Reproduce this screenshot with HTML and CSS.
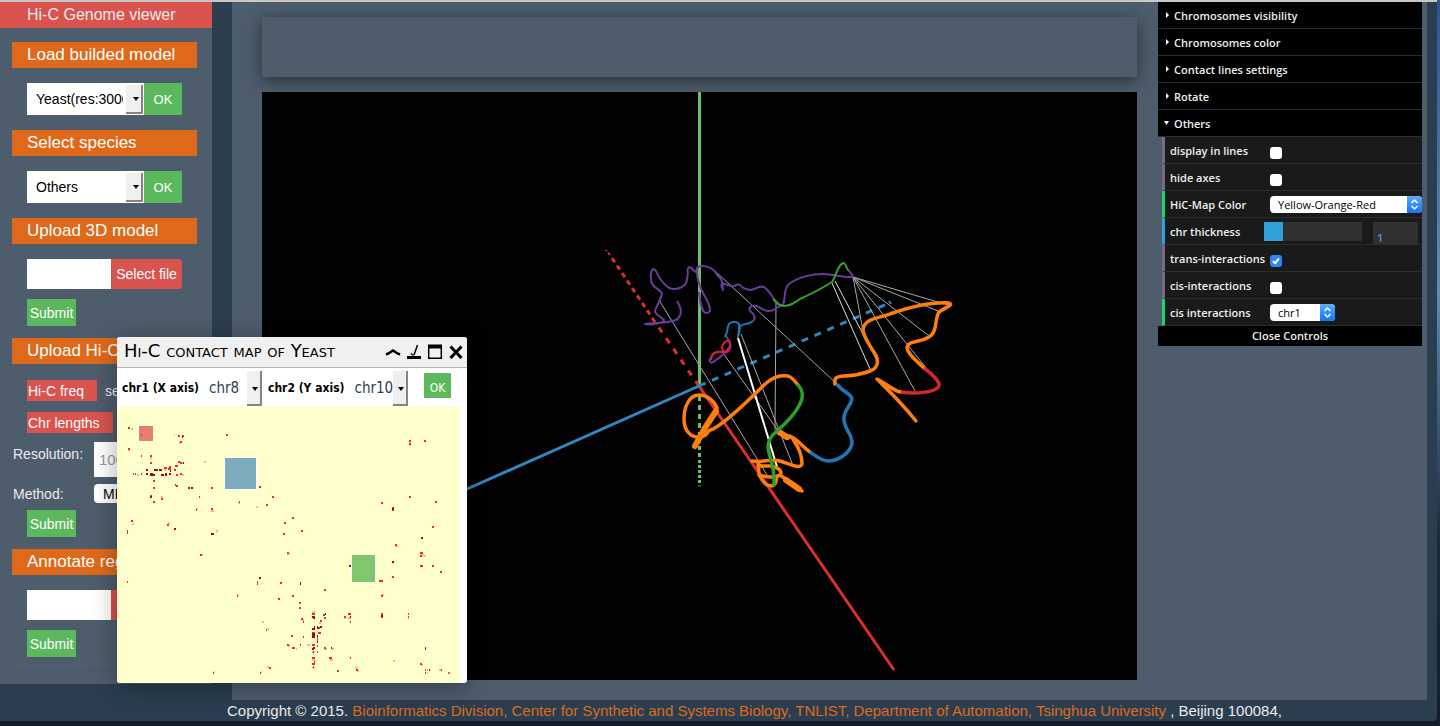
FILE: index.html
```html
<!DOCTYPE html>
<html lang="en">
<head>
<meta charset="utf-8">
<title>Hi-C Genome viewer</title>
<link rel="stylesheet" href="styles.css">
</head>
<body>
<div class="window">
  <div class="columns">
    <aside class="sidebar">
      <h1 class="brand">Hi-C Genome viewer</h1>
      <div class="sections">
        <h2 class="heading">Load builded model</h2>
        <div class="pick-row">
          <span class="pick"><select aria-label="Builded model"><option>Yeast(res:3000)</option></select></span>
          <button class="ok">OK</button>
        </div>
        <h2 class="heading">Select species</h2>
        <div class="pick-row">
          <span class="pick"><select aria-label="Species"><option>Others</option></select></span>
          <button class="ok">OK</button>
        </div>
        <h2 class="heading">Upload 3D model</h2>
        <div class="file-row">
          <input class="file-name" type="text" aria-label="3D model file">
          <button class="file-button">Select file</button>
        </div>
        <button class="submit">Submit</button>
        <h2 class="heading heading-close">Upload Hi-C data</h2>
        <div class="tag-row"><button class="tag tag-freq">Hi-C freq</button><span>select file</span></div>
        <div class="tag-row"><button class="tag tag-chr">Chr lengths</button></div>
        <div class="field-row">
          <label for="resolution">Resolution:</label>
          <input id="resolution" class="resolution" type="text" placeholder="10000">
        </div>
        <div class="field-row">
          <label for="method">Method:</label>
          <select id="method" class="method"><option>MDS</option></select>
        </div>
        <button class="submit submit-near">Submit</button>
        <h2 class="heading heading-close">Annotate regions</h2>
        <div class="file-row">
          <input class="file-name" type="text" aria-label="Annotation file">
          <button class="file-button">Select file</button>
        </div>
        <button class="submit">Submit</button>
        <hr class="rule">
      </div>
    </aside>

    <main class="main">
      <div class="stage">
        <div class="banner"></div>
        <svg class="scene" viewBox="262 92 875 588" role="img" aria-label="3D genome model">
          <g class="axis">
            <path class="ax-green" stroke-width="3" d="M699.5 92V386"/>
            <path class="ax-green" stroke-width="3" stroke-dasharray="5 4" d="M699.5 396V430"/>
            <path class="ax-green" stroke-width="3" stroke-dasharray="4 3" d="M699.5 432V460"/>
            <path class="ax-green" stroke-width="3" stroke-dasharray="3 2" d="M699.5 460V483"/>
            <path class="ax-green" stroke-width="3" opacity=".4" d="M699.5 485v2"/>
            <path class="ax-red" stroke-width="3" d="M699 386 894 670"/>
            <path class="ax-red" stroke-width="3" stroke-dasharray="6 7" d="M699 386 655 322"/>
            <path class="ax-red" stroke-width="3" stroke-dasharray="5 4" d="M655 322 612 258"/>
            <path class="ax-red" stroke-width="2" stroke-dasharray="3 2" d="M610 255 606 250"/>
            <path class="ax-blue" stroke-width="3" d="M699 386 440 501"/>
            <path class="ax-blue" stroke-width="3" stroke-dasharray="7 7" d="M699 386 887 304"/>
            <path class="ax-blue" stroke-width="2" d="M889 301l2 3"/>
          </g>
          <g class="contacts">
            <path d="M715 271 837 384M659 300 767 475M723 353 779 432M741 334 792 463M776 303 775 430"/>
            <path d="M853 277 863 331M853 277 915 391M853 277 927 369M853 277 929 336M853 277 938 311M853 277 948 305"/>
            <path class="strong" d="M832 283 870 369M835 281 863 334"/>
            <path class="strongest" d="M738 338 777 467"/>
          </g>
          <g class="purple">
            <path d="M677 301C682 309 682 316 676 320C668 323 655 323 645 324C651 325 663 324 664 320C662 317 657 316 655 312C655 308 661 300 662 293C658 288 651 287 651 279C650 270 653 267 656 271C659 279 665 285 669 288C678 291 687 286 687 279C689 271 686 269 689 267C693 268 694 273 697 272C696 269 697 266 702 266C710 266 715 270 718 276C722 278 723 283 723 290C721 286 720 283 725 284C728 286 729 285 733 286C737 286 737 283 740 285C743 289 746 289 750 290C756 290 758 285 764 287C769 290 772 297 775 300C778 304 779 305 783 305C786 298 783 289 789 284C798 277 812 274 823 274C834 274 842 278 853 277C853 274 851 273 849 271"/>
            <path d="M698 267C695 275 700 288 704 295C711 307 712 313 706 313C701 312 700 300 699 292"/>
            <path d="M783 305C778 306 773 312 768 311C764 311 760 307 756 306C752 305 748 307 750 311C753 313 757 318 753 321"/>
            <path d="M725 335C727 338 731 341 730 346C727 351 722 356 716 360C709 366 709 360 711 357C713 352 719 351 723 352"/>
          </g>
          <path class="blue-thin" d="M753 321C749 325 744 323 740 326C740 331 739 333 738 337C739 328 741 322 735 322C727 321 728 328 727 332L725 337"/>
          <path class="red-thin" d="M711 360C712 352 717 351 723 352C732 353 731 344 729 341C725 340 722 345 722 348C723 351 725 353 727 352"/>
          <path class="green-thin" d="M773 299C777 303 779 306 784 306C790 306 794 303 800 299C813 293 821 289 832 282C836 277 838 263 844 263C847 265 846 269 849 271"/>
          <g class="orange">
            <path d="M835 384C834 376 838 377 843 376C855 376 862 374 870 371C880 367 878 359 875 354C868 342 864 338 863 330C864 318 880 318 890 314C913 306 933 302 949 303C954 305 946 307 939 312C934 320 938 332 929 337C919 343 908 340 907 348C908 355 919 363 924 368"/>
            <path d="M901 392C893 391 886 383 877 379C886 388 901 402 916 421"/>
            <path d="M717 408C715 402 708 395 699 395C689 395 684 407 684 419C684 431 691 438 700 437C710 436 705 430 713 429C726 422 747 402 764 385C773 377 779 375 788 376C793 378 795 381 798 385"/>
            <path d="M778 430C781 433 784 439 788 438C789 434 793 437 794 441C799 448 802 456 802 464C801 470 787 463 780 461C770 458 762 463 752 461"/>
            <path d="M791 437C797 439 803 447 810 452"/>
            <path d="M757 461C760 464 757 469 760 476C763 483 767 486 772 486C776 485 776 481 777 476"/>
            <path d="M758 466H771C777 467 781 470 781 473C780 478 768 478 759 475"/>
            <path class="thick" d="M716 411C709 421 701 434 695 446"/>
            <path class="thick" d="M779 432 787 437M786 480 799 489"/>
            <path d="M780 475 802 491"/>
          </g>
          <path class="red-thick" d="M924 368C930 373 940 380 939 386C936 393 914 394 901 392"/>
          <path class="blue-thick" d="M837 384C842 392 851 393 852 399C850 408 843 410 844 420C845 431 853 434 852 444C849 454 838 461 828 461C820 460 816 456 810 452"/>
          <path class="green-thick" d="M798 385C802 389 804 396 800 404C794 416 784 425 777 431C772 435 768 440 768 447C769 459 775 464 774 485"/>
        </svg>
      </div>

      <section class="controls" aria-label="Controls">
        <button class="folder">Chromosomes visibility</button>
        <button class="folder">Chromosomes color</button>
        <button class="folder">Contact lines settings</button>
        <button class="folder">Rotate</button>
        <button class="folder open">Others</button>
        <div class="options">
          <div class="option"><label for="lines">display in lines</label><input id="lines" type="checkbox"></div>
          <div class="option"><label for="axes">hide axes</label><input id="axes" type="checkbox"></div>
          <div class="option choice"><label for="mapcolor">HiC-Map Color</label>
            <span class="mac wide"><select id="mapcolor"><option>Yellow-Orange-Red</option></select><svg viewBox="0 0 14 17"><path d="M4 7 7 4l3 3M4 10l3 3 3-3"/></svg></span></div>
          <div class="option number"><label for="thickness">chr thickness</label>
            <input id="thickness" class="slider" type="range" min="0" max="5" value="1"><input class="amount" type="text" value="1" aria-label="chr thickness value"></div>
          <div class="option"><label for="trans">trans-interactions</label><input id="trans" type="checkbox" checked></div>
          <div class="option"><label for="cis">cis-interactions</label><input id="cis" type="checkbox"></div>
          <div class="option choice"><label for="cischr">cis interactions</label>
            <span class="mac"><select id="cischr"><option>chr1</option></select><svg viewBox="0 0 14 17"><path d="M4 7 7 4l3 3M4 10l3 3 3-3"/></svg></span></div>
        </div>
        <button class="close-controls">Close Controls</button>
      </section>
    </main>
  </div>

  <footer class="footer">Copyright © 2015. <a href="#">Bioinformatics Division, Center for Synthetic and Systems Biology, TNLIST, Department of Automation, Tsinghua University</a> , Beijing 100084,</footer>

  <section class="dialog" aria-label="Hi-C contact map of Yeast">
    <header class="dialog-bar">
      <h2 class="dialog-title">Hi-C contact map of Yeast</h2>
      <button class="tool" aria-label="Collapse"><svg viewBox="0 0 16 16"><path d="M1 10.500C4 9.500 6 8 8 6.500C10 8 12 9.500 15 10.500" stroke-width="2.500"/></svg></button>
      <button class="tool" aria-label="Minimize"><svg viewBox="0 0 16 16"><path d="M1 13.500H15" stroke-width="3"/><path d="M11.500 1 8 11" stroke-width="1.500"/><path d="M5 9.500 7.500 11.500" stroke-width="1.500"/></svg></button>
      <button class="tool" aria-label="Maximize"><svg viewBox="0 0 16 16"><path d="M1.700 2V14.300H14.300V2" stroke-width="1.500"/><path d="M1 2.500H15" stroke-width="4"/></svg></button>
      <button class="tool" aria-label="Close"><svg viewBox="0 0 16 16"><path d="M2.500 2.500 13.500 14M13.500 2.500 2.500 14" stroke-width="3"/></svg></button>
    </header>
    <div class="dialog-form">
      <label for="xchr">chr1 (X axis)</label>
      <span class="pick axis-pick"><select id="xchr"><option>chr8</option></select></span>
      <label for="ychr">chr2 (Y axis)</label>
      <span class="pick axis-pick"><select id="ychr"><option>chr10</option></select></span>
      <button class="ok-small">OK</button>
    </div>
    <svg class="heatmap" viewBox="117 407 343 276" role="img" aria-label="Contact map">
      <path class="low" d="M131 429h2M174 435h1M179 443h2M182 463h2M204 462h2M409 442h2M409 445h2M128 450h2M150 458h2M164 470h2M137 475h2M182 475h2M161 497h2M238 503h2M256 507h2M196 509h2M211 511h3M132 524h2M168 523h2M216 531h2M217 532h1M200 555h3M287 554h3M421 555h3M424 556h2M395 546h3M393 563h1M381 595h3M237 595h2M312 612h3M344 618h2M348 618h3M408 618h1M302 620h2M319 623h2M262 622h2M267 629h2M288 646h2M307 645h3M324 649h3M332 649h2M312 652h3M312 660h3M330 660h3M315 661h1M312 668h3M393 661h2M421 665h2M267 667h2M355 668h3M357 671h2M296 649h1M214 672h1M261 672h1M427 670h1M439 670h2M449 673h2M427 673h1"/>
      <path class="mid" d="M128 428h2M178 436h2M182 436h2M180 442h2M226 435h2M409 441h2M409 444h2M424 441h2M128 449h2M141 456h1M150 456h2M150 463h2M178 462h2M180 463h2M175 466h3M169 467h2M164 468h3M168 469h3M174 470h2M133 474h1M135 474h1M141 474h1M176 475h2M180 474h2M153 481h2M175 485h1M176 486h2M153 488h2M211 488h2M259 487h2M150 496h2M161 499h2M199 497h1M272 497h2M153 502h2M239 502h1M266 505h2M196 510h1M409 497h2M435 502h2M381 503h2M392 508h2M392 510h2M211 509h2M292 518h2M284 523h2M131 521h2M167 525h2M127 531h1M127 533h1M283 534h2M301 531h2M432 527h2M395 545h2M200 555h2M287 553h2M420 553h3M420 556h2M420 566h3M432 566h2M440 572h2M392 577h2M127 582h1M257 582h1M257 584h1M280 583h2M379 581h4M324 590h2M237 596h1M292 596h2M381 596h2M278 599h2M299 603h2M299 608h2M312 614h3M323 615h2M324 618h2M348 614h3M344 617h2M381 614h2M381 617h2M408 614h1M408 617h1M301 619h2M303 622h1M320 621h2M350 622h1M266 630h1M318 628h2M312 633h3M318 633h3M291 636h2M303 637h1M317 638h1M317 640h1M287 645h2M300 645h1M312 645h3M317 646h1M292 648h3M324 648h2M425 648h1M313 652h1M317 652h1M312 658h3M329 658h3M350 658h1M314 662h1M312 664h3M313 667h1M420 664h2M269 668h2M337 671h2M356 670h2M213 673h1M260 673h1M425 670h1M441 670h1M425 673h1M448 673h1"/>
      <path class="high" d="M150 474h3M150 475h3M153 475h2M161 475h3M165 474h2M165 475h2M169 474h2M146 470h2M154 470h4M159 470h3M188 488h2M191 488h2M146 474h2M182 437h1M183 463h1M170 471h1M150 497h2M174 529h2M211 534h3M392 509h2M421 538h2M392 562h2M349 566h2M259 578h2M300 583h1M300 584h1M381 616h2M312 617h3M313 618h2M350 617h1M312 629h3M314 627h1M317 627h1M317 628h2M320 627h2M312 636h3M312 637h3M312 634h3M317 636h1M317 642h1M313 648h2M312 649h2M331 648h1M425 649h1M429 670h1M325 614h1"/>
      <rect class="area area-red" x="138.500" y="425.500" width="15" height="16"/>
      <rect class="area area-blue" x="224.500" y="457.500" width="32" height="32"/>
      <rect class="area area-green" x="351.500" y="554.500" width="24" height="28"/>
      <path class="mid" d="M141 435h1"/>
    </svg>
  </section>
</div>
</body>
</html>
```
FILE: styles.css
```css
* { box-sizing: border-box; }

body {
  margin: 0;
  min-height: 100vh;
  padding: 0 3px 5px 0;
  background: linear-gradient(#2a5594, #5d8db4 40%, #1c2838 75%, #141d2b);
  font-family: "Liberation Sans", Arial, sans-serif;
  font-size: 14px;
  color: #ebebeb;
}

button, input, select { font: inherit; margin: 0; border: 0; padding: 0; border-radius: 0; }
button { color: #fff; white-space: nowrap; cursor: pointer; }
select { appearance: none; }

.window {
  position: relative;
  background: #2b3e50;
  border-top: 2px solid #c8c8c8;
  border-bottom-right-radius: 4px;
  box-shadow: 0 5px 0 #111a28;
}
.columns { display: flex; align-items: flex-start; gap: 20px; padding-right: 10px; }

/* Sidebar */
.sidebar { flex: 0 0 212px; background: #4e5d6c; padding-bottom: 13px; }
.brand {
  margin: 0 0 14px;
  padding-left: 27px;
  background: #d9534f;
  font-size: 16px;
  font-weight: 400;
  line-height: 26px;
}
.sections { display: flow-root; padding: 0 15px 0 12px; }
.heading {
  margin: 15px 0;
  padding-left: 15px;
  background: #df691a;
  color: #fff;
  font-size: 17px;
  font-weight: 400;
  line-height: 26px;
  white-space: nowrap;
  overflow: hidden;
}
.heading:first-child { margin-top: 0; }
.heading-close { margin: 12px 0 15px; }
.pick-row { display: flex; margin-left: 15px; height: 32px; }
.pick { position: relative; width: 117px; }
.pick select {
  width: 100%;
  height: 100%;
  padding: 0 21px 0 9px;
  background: #fff;
  color: #000;
}
.pick::before {
  content: "";
  position: absolute;
  top: 2px;
  right: 1px;
  bottom: 1px;
  width: 15px;
  background: #efefef;
  border-right: 2px solid #858585;
  border-bottom: 2px solid #858585;
  pointer-events: none;
}
.pick::after {
  content: "";
  position: absolute;
  top: 14px;
  right: 5px;
  border: 3px solid transparent;
  border-top: 4px solid #000;
  pointer-events: none;
}
.ok { width: 38px; background: #5cb85c; font-size: 13px; }
.file-row { display: flex; margin-left: 15px; height: 30px; }
.file-name { width: 84px; background: #fff; }
.file-button { width: 71px; background: #d9534f; border-radius: 0 4px 4px 0; }
.submit {
  display: block;
  width: 49px;
  height: 27px;
  margin: 10px 0 0 15px;
  background: #5cb85c;
}
.submit-near { margin-top: 7px; }
.tag-row { display: flex; align-items: center; gap: 8px; height: 21px; margin: 16px 0 0 15px; white-space: nowrap; }
.tag-row + .tag-row { margin-top: 11px; }
.tag { height: 21px; padding-left: 1px; background: #d9534f; text-align: left; }
.tag-freq { width: 70px; }
.tag-chr { width: 86px; }
.field-row { display: flex; align-items: center; margin-top: 7px; padding-left: 1px; }
.tag-row + .field-row { margin-top: 9px; align-items: flex-start; line-height: 24px; }
.field-row label { width: 81px; }
.resolution { width: 80px; height: 35px; padding: 0 5px; background: #fff; font-size: 15px; }
.resolution::placeholder { color: #999; }
.method { width: 80px; height: 19px; padding-left: 9px; border-radius: 4px; background: #fff; color: #000; }
.rule { height: 1px; margin: 13px 0 0; border: 0; background: #485563; }

/* Main area */
.main {
  flex: 1;
  min-width: 0;
  display: flex;
  align-items: flex-start;
  gap: 21px;
  padding: 0 5px 20px 30px;
  background: #4e5d6c;
}
.stage { flex: 1; min-width: 0; padding-top: 15px; }
.banner { height: 60px; margin-bottom: 15px; background: #4e5d6c; box-shadow: 0 4px 16px rgba(0, 0, 0, .5); }
.scene { position: relative; display: block; width: 100%; background: #020202; }
.scene path { fill: none; stroke-linejoin: round; }
.ax-green { stroke: #6abf69; }
.ax-red { stroke: #d9302c; }
.ax-blue { stroke: #3087c0; }
.contacts path { stroke: #a8a8a8; stroke-width: 1; }
.contacts .strong { stroke: #dedede; }
.contacts .strongest { stroke: #fff; stroke-width: 2; }
.purple path { stroke: #6a3d9a; stroke-width: 2; }
.blue-thin { stroke: #1f78b4; stroke-width: 2; }
.red-thin { stroke: #d4213a; stroke-width: 2; }
.green-thin { stroke: #33a02c; stroke-width: 2; }
.orange path { stroke: #ff7f0e; stroke-width: 3.5; stroke-linecap: round; }
.orange .thick { stroke-width: 6; }
.red-thick { stroke: #d62728; stroke-width: 3.5; }
.blue-thick { stroke: #1f77b4; stroke-width: 3.5; }
.green-thick { stroke: #2ca02c; stroke-width: 3.5; stroke-linecap: round; }

/* Control panel */
.controls {
  flex: 0 0 264px;
  font: 600 11px/20px "Open Sans", "Noto Sans", sans-serif;
  color: #eee;
}
.folder {
  display: flex;
  align-items: center;
  gap: 5px;
  width: 100%;
  height: 27px;
  padding: 2px 0 0 8px;
  background: #000;
  border-bottom: 1px solid #2c2c2c;
  color: #eee;
}
.folder::before {
  content: "";
  width: 3px;
  height: 6px;
  margin-bottom: 2px;
  background: #fff;
  clip-path: polygon(0 0, 100% 50%, 0 100%);
}
.folder.open { padding-left: 6px; }
.folder.open::before { width: 5px; height: 4px; clip-path: polygon(0 0, 100% 0, 50% 100%); }
.options { margin-left: 4px; }
.option {
  display: flex;
  align-items: center;
  height: 27px;
  padding-left: 5px;
  background: #1a1a1a;
  border-left: 3px solid #806787;
  border-bottom: 1px solid #2c2c2c;
}
.option label { flex: 0 0 100px; padding-top: 2px; white-space: nowrap; }
.choice { border-left-color: #1ed36f; }
.number { border-left-color: #2fa1d6; }
.number label { flex-basis: 94px; }
.option input[type="checkbox"] {
  appearance: none;
  position: relative;
  width: 12px;
  height: 12px;
  margin-top: 5px;
  border-radius: 3px;
  background: #fff;
}
.option input[type="checkbox"]:checked { background: #2d86f7; }
.option input[type="checkbox"]:checked::after {
  content: "";
  position: absolute;
  left: 4px;
  top: 2px;
  width: 4px;
  height: 7px;
  box-sizing: border-box;
  border: solid #fff;
  border-width: 0 2px 2px 0;
  transform: rotate(40deg);
}
.mac { position: relative; width: 65px; height: 17px; }
.mac.wide { flex: 1; }
.mac select {
  display: block;
  width: 100%;
  height: 17px;
  padding: 0 16px 0 8px;
  border-radius: 4px;
  background: #fff;
  color: #000;
  font-weight: 400;
  line-height: 17px;
}
.mac svg {
  position: absolute;
  top: 0;
  right: 0;
  width: 15px;
  height: 17px;
  border-radius: 0 4px 4px 0;
  background: linear-gradient(#5cadfb, #1273f7);
  fill: none;
  stroke: #fff;
  stroke-width: 1.5;
  pointer-events: none;
}
.slider { appearance: none; width: 98px; height: 19px; background: linear-gradient(90deg, #2fa1d6 19px, #303030 19px); }
.slider::-webkit-slider-thumb { appearance: none; width: 1px; height: 1px; }
.amount {
  width: 45px;
  height: 22px;
  margin: 4px 0 0 11px;
  padding: 8px 0 0 4px;
  background: #303030;
  color: #2fa1d6;
  line-height: 14px;
}
.close-controls { display: block; width: 100%; height: 20px; background: #000; color: #eee; }

.footer { height: 21px; padding-left: 227px; font-size: 15px; line-height: 22px; white-space: nowrap; }
.footer a { color: #df691a; text-decoration: none; }

/* Contact map dialog */
.dialog {
  position: absolute;
  top: 335px;
  left: 117px;
  width: 350px;
  overflow: hidden;
  border-radius: 3px;
  background: #fff;
  color: #000;
  font-family: "DejaVu Sans Condensed", "Noto Sans", sans-serif;
  box-shadow: 0 4px 26px rgba(0, 0, 0, .35);
}
.dialog-bar {
  display: flex;
  align-items: center;
  gap: 5px;
  height: 31px;
  padding: 0 3px 0 7px;
  background: #f0f0f0;
  border-bottom: 1px solid #b7b7b7;
}
.dialog-title {
  flex: 1;
  margin: 0;
  padding-bottom: 3px;
  font-family: "DejaVu Sans", sans-serif;
  font-size: 18px;
  font-weight: 400;
  font-variant: small-caps;
  white-space: nowrap;
}
.tool { width: 16px; height: 16px; background: none; }
.tool svg { display: block; width: 16px; height: 16px; fill: none; stroke: #000; }
.dialog-form { display: flex; align-items: center; height: 39px; padding: 0 16px 0 5px; font-size: 12px; }
.dialog-form label { font-weight: 700; white-space: nowrap; }
.axis-pick { width: 57px; height: 38px; margin: 0 6px; }
.axis-pick select { padding: 0 12px 0 4px; color: #2b3e50; font-size: 15px; }
.axis-pick::before { right: 0; width: 13px; }
.axis-pick::after { top: 18px; right: 4px; }
.ok-small { width: 27px; height: 25px; margin: 0 0 5px auto; padding-top: 5px; background: #5cb85c; }
.heatmap { display: block; width: 343px; background: #ffffcc; shape-rendering: crispEdges; }
.heatmap path { stroke-width: 2; fill: none; }
.low { stroke: #fdb48a; }
.mid { stroke: #e8302a; }
.high { stroke: #a00522; }
.area { stroke: #fff; }
.area-red { fill: #e67e6a; }
.area-blue { fill: #7bacbe; }
.area-green { fill: #80c66a; }
```
